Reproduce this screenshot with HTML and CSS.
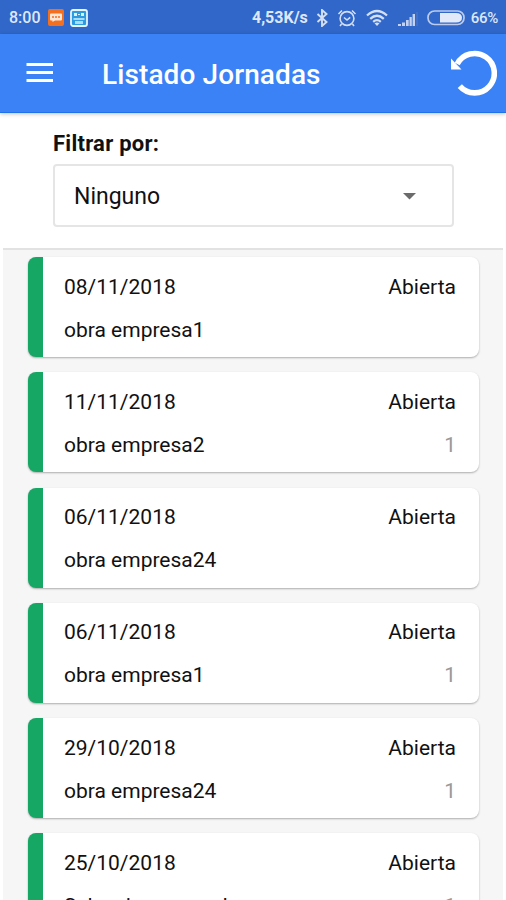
FILE: index.html
```html
<!DOCTYPE html>
<html lang="es">
<head>
<meta charset="utf-8">
<title>Listado Jornadas</title>
<link rel="stylesheet" href="styles.css">
</head>
<body>
<div class="status">
  <span class="status-text">8:00</span>
  <svg class="app-icon" width="16" height="17" viewBox="0 0 16 17"><rect width="16" height="17" rx="2" fill="#f37021"/><path d="M3 4.500h10q1 0 1 1v5q0 1-1 1H7l-2.500 1.500v-1.500H3q-1 0-1-1v-5q0-1 1-1z" fill="#ffe6d5"/><path d="M4 8h8" stroke="#f58a4b" stroke-width="2" stroke-dasharray="2 1"/></svg>
  <svg class="pic-icon" width="18" height="18" viewBox="0 0 18 18"><rect x="1" y="1" width="16" height="16" rx="2" fill="#2c9be0" stroke="#e6f6ff" stroke-width="1.800"/><path d="M4 4h3v3H4zM11 4h3v3h-3zM8 5h2v1H8z" fill="#d9f1ff"/><path d="M3.500 9h11v2h-11zM5 12h8v3H5z" fill="#a9dcf8"/></svg>
  <span class="status-text speed">4,53K/s</span>
  <svg class="bt" width="12" height="18" viewBox="0 0 12 18"><path d="M1.500 5l9 8L6 17V1l4.500 4-9 8" fill="none" stroke="#d5dff4" stroke-width="1.900"/></svg>
  <svg class="alarm" width="20" height="18" viewBox="0 0 20 18"><g fill="none" stroke="#d5dff4" stroke-width="1.600"><circle cx="10" cy="9.500" r="6.900"/><path d="M1.500 5L5 1.500M15 1.500L18.500 5M4.500 15L3 17M15.500 15l1.500 2M7 8.500l3 2.500 3.200-2.700"/></g></svg>
  <svg class="wifi" width="22" height="18" viewBox="0 0 22 18"><g fill="none" stroke="#d5dff4" stroke-width="2.300"><path d="M1 6.500Q11-2.500 21 6.500M4.200 9.800q6.800-6 13.600 0M7.200 12.800q3.800-3.300 7.600 0"/></g><path d="M8.500 14.300q2.500-1.800 5 0L11 17z" fill="#d5dff4"/></svg>
  <svg class="signal" width="20" height="15" viewBox="0 0 20 15"><path d="M0 12h3v2H0zM4 10.500h3V14H4zM8 8h2.700v6H8zM11.500 5h2.300v9h-2.300zM14.600 2H17v12h-2.400z" fill="#c5d2ef"/><path d="M18 0h2v14h-2z" fill="#4170c9"/></svg>
  <svg class="battery" width="38" height="16" viewBox="0 0 38 16"><rect x="1" y="1" width="36" height="13.500" rx="6.500" fill="none" stroke="#bccaeb" stroke-width="1.700"/><path d="M13 3h16q6 0 6 4.750t-6 4.750H13z" fill="#e2e9f8"/></svg>
  <span class="status-text percent">66%</span>
</div>
<header class="bar">
  <svg class="menu" width="28" height="20" viewBox="0 0 28 20"><path d="M.5 1.500h26.500M.5 9.500h26.500M.5 17.500h26.500" stroke="#fff" stroke-width="3"/></svg>
  <h1 class="title">Listado Jornadas</h1>
  <svg class="reload" width="50" height="50" viewBox="0 0 50 50"><path d="M10.200 16A19.700 19.700 0 1 1 12.800 38.200" fill="none" stroke="#fff" stroke-width="5.600"/><path d="M4 10.500V21.500H14.500z" fill="#fff"/></svg>
</header>
<section class="filter">
  <div class="filter-label">Filtrar por:</div>
  <div class="select"><span>Ninguno</span><svg width="13" height="7" viewBox="0 0 13 7"><path d="M0 0h13L6.500 6.500z" fill="#6b6b6b"/></svg></div>
</section>
<main class="list">
  <article class="card"><div class="row"><span>08/11/2018</span><span>Abierta</span></div><div class="row"><span>obra empresa1</span></div></article>
  <article class="card"><div class="row"><span>11/11/2018</span><span>Abierta</span></div><div class="row"><span>obra empresa2</span><span class="count">1</span></div></article>
  <article class="card"><div class="row"><span>06/11/2018</span><span>Abierta</span></div><div class="row"><span>obra empresa24</span></div></article>
  <article class="card"><div class="row"><span>06/11/2018</span><span>Abierta</span></div><div class="row"><span>obra empresa1</span><span class="count">1</span></div></article>
  <article class="card"><div class="row"><span>29/10/2018</span><span>Abierta</span></div><div class="row"><span>obra empresa24</span><span class="count">1</span></div></article>
  <article class="card"><div class="row"><span>25/10/2018</span><span>Abierta</span></div><div class="row"><span>Seleccione una obra</span><span class="count">1</span></div></article>
</main>
</body>
</html>
```
FILE: styles.css
```css
* { box-sizing: border-box; }
body {
  margin: 0;
  height: 900px;
  overflow: hidden;
  display: flex;
  flex-direction: column;
  background: #fff;
  color: #111;
  font-family: Roboto, "Liberation Sans", sans-serif;
}
svg { display: block; flex: none; }
.status {
  flex: none;
  height: 34px;
  display: flex;
  align-items: center;
  padding: 1px 8px 0 9px;
  background: #3067c8;
}
.status-text {
  color: #dfe7f7;
  font-size: 16px;
  font-weight: 500;
  white-space: nowrap;
}
.app-icon { margin-left: 7px; }
.pic-icon { margin-left: 6px; }
.speed { margin-left: auto; font-weight: 700; }
.percent { font-size: 15px; letter-spacing: -.3px; }
.bt { margin-left: 8px; }
.alarm { margin-left: 9px; }
.wifi { margin-left: 9px; }
.signal { margin: 3px 0 0 10px; }
.battery { margin: 0 6px 0 9px; }
.bar {
  flex: none;
  height: 79px;
  display: flex;
  align-items: center;
  padding: 0 9px 0 26px;
  background: #3b82f7;
  border-bottom: 1px solid #1f72ea;
  box-shadow: 0 1px 4px rgba(0, 0, 0, .25);
}
.title {
  margin: 4px auto 0 48px;
  color: #fff;
  font-size: 28px;
  font-weight: 500;
  line-height: 32px;
  letter-spacing: .1px;
}
.filter {
  flex: none;
  height: 137px;
  margin: 0 3px;
  padding: 18px 49px 0 50px;
  border-bottom: 2px solid #e2e2e2;
}
.filter-label {
  font-size: 22px;
  font-weight: 700;
  line-height: 26px;
  letter-spacing: .25px;
}
.select {
  height: 63px;
  margin-top: 7px;
  padding: 2px 36px 0 19px;
  display: flex;
  align-items: center;
  justify-content: space-between;
  border: 2px solid #e5e5e5;
  border-radius: 4px;
  font-size: 23px;
}
.list {
  flex: 1;
  min-height: 0;
  margin: 0 3px;
  padding: 7px 24px 0 25px;
  background: #f6f6f6;
}
.card {
  height: 100px;
  margin-bottom: 15.300px;
  padding: 8px 23px 0 21px;
  border-left: 15px solid #16a765;
  border-radius: 8px;
  background: #fff;
  box-shadow: 0 1px 2px rgba(0, 0, 0, .3);
}
.row {
  height: 43px;
  display: flex;
  align-items: center;
  justify-content: space-between;
  font-size: 21px;
}
.count { color: #999; }
```
